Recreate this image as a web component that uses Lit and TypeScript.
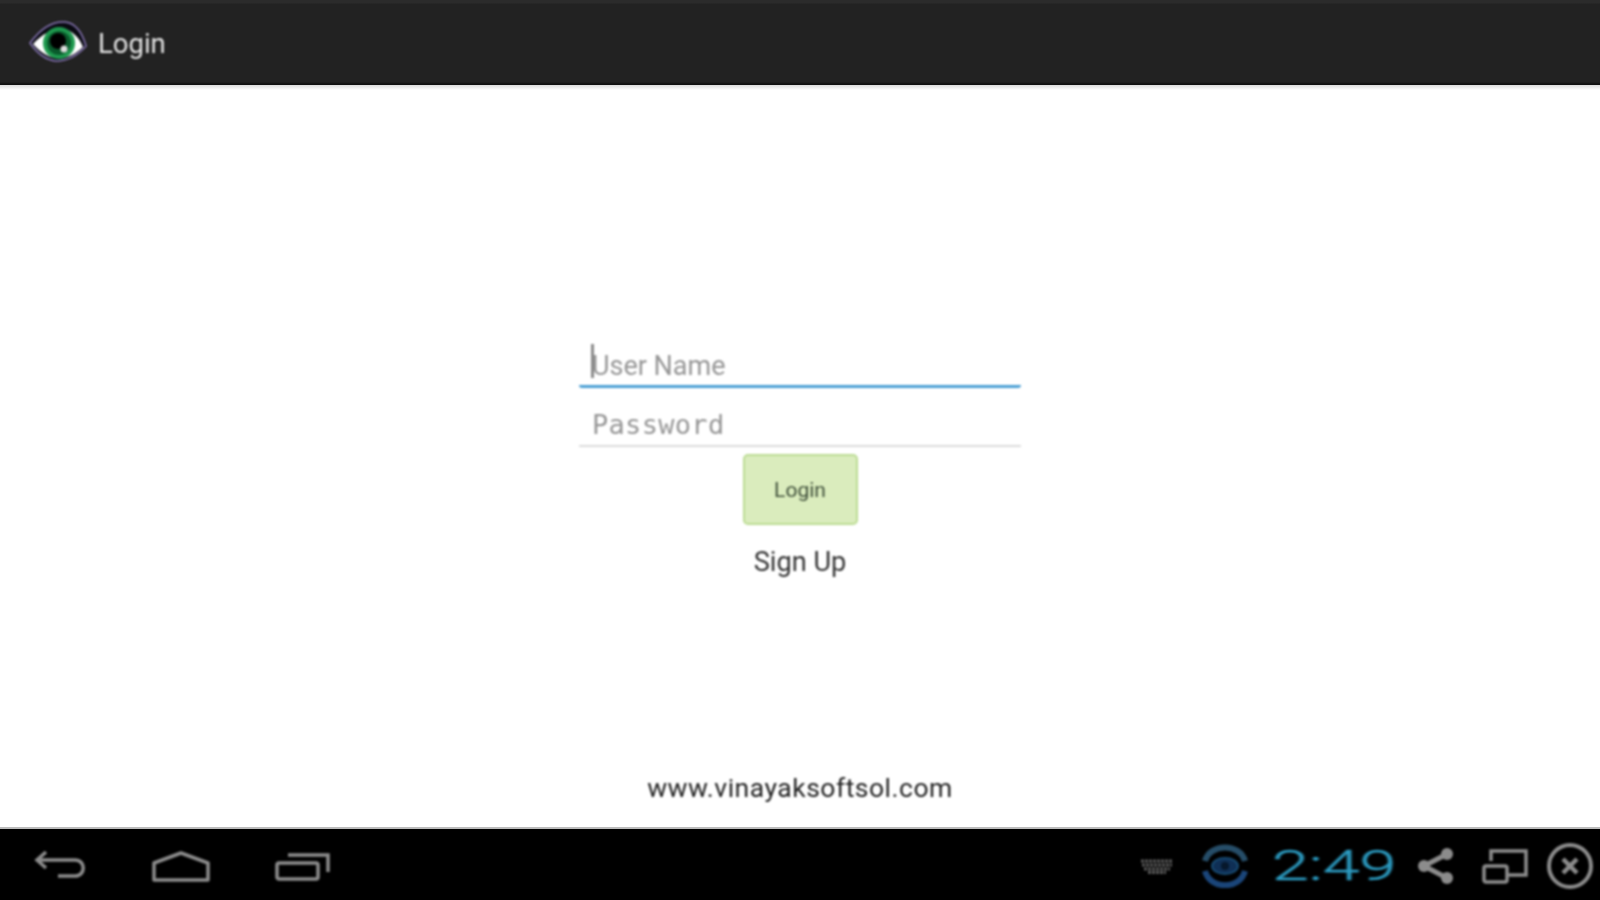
import { LitElement, html, css } from "lit";
import { customElement } from "lit/decorators.js";

@customElement("app-root")
export class AppRoot extends LitElement {
  static styles = css`
    :host { display: flex; flex-direction: column; width: 1600px; height: 900px; overflow: hidden; background: #fff; font-family: Roboto, "Liberation Sans", sans-serif; }
    .bar { height: 85px; flex: none; box-sizing: border-box; display: flex; align-items: center; padding: 0 0 0 29px; background: linear-gradient(#2b2b2b 0, #2b2b2b 3px, #222 4px, #222 82px, #111 84px); position: relative; }
    .bar::after { content: ""; position: absolute; left: 0; right: 0; top: 85px; height: 5px; background: linear-gradient(#dcdcdc, #fff); }
    .logo { width: 58px; height: 42px; margin-bottom: 3px; filter: blur(.8px); }
    .title { margin-left: 11px; margin-top: 2px; color: #e4e4e4; font-size: 27.5px; line-height: 30px; filter: blur(.8px); }
    .main { flex: 1; min-height: 0; display: flex; flex-direction: column; align-items: center; padding-top: 255px; box-sizing: border-box; filter: blur(.8px); }
    .field { width: 442px; height: 59px; box-sizing: border-box; padding: 0 13px 2px; display: flex; align-items: flex-end; position: relative; color: #969696; font-size: 27px; line-height: 36px; border-bottom: 2px solid #dcdcdc; }
    .field.focus { height: 48px; border-bottom: 3px solid #4a9fd4; padding-bottom: 1px; border-radius: 0 0 3px 3px; }
    .field.mono { font-family: "DejaVu Sans Mono", monospace; font-size: 27px; letter-spacing: .3px; }
    .caret { position: absolute; left: 12px; bottom: 7px; width: 3px; height: 34px; background: #8a8a8a; }
    .btn { width: 115px; height: 71px; box-sizing: border-box; margin-top: 7px; display: flex; align-items: center; justify-content: center; background: #daecbd; border: 2px solid #bcdc94; border-radius: 5px; color: #3e4e39; font-size: 21px; }
    .signup { margin-top: 20px; color: #333; font-size: 27.2px; line-height: 34px; }
    .site { margin-top: auto; margin-bottom: 23px; color: #222; font-size: 26.5px; line-height: 32px; letter-spacing: .5px; }
    .nav { height: 73px; flex: none; box-sizing: border-box; background: #000; border-top: 2px solid #bbb; display: flex; align-items: center; padding: 2px 6px 0 34px; }
    .nav svg, .clock { filter: blur(.9px); }
    .nav svg { flex: none; fill: none; stroke: #8c8c8c; stroke-width: 3.5; }
    .back { width: 52px; height: 32px; margin-top: 3px; }
    .home { width: 58px; height: 32px; margin-left: 66px; margin-top: 2px; }
    .recent { width: 56px; height: 28px; margin-left: 65px; margin-top: 2px; }
    .spacer { flex: 1; }
    .kbd { width: 34px; height: 16px; }
    .nav svg.kbd { stroke: #5a5a5a; stroke-width: 3; }
    .sync { width: 46px; height: 44px; margin-left: 28px; }
    .clock { width: 122px; margin-left: 24px; color: #2c9cc2; font-size: 42px; line-height: 44px; font-weight: 300; -webkit-text-stroke: .4px #2c9cc2; white-space: nowrap; transform: scaleX(1.58); transform-origin: left center; }
    .share { width: 38px; height: 38px; margin-left: 23px; }
    .win { width: 46px; height: 36px; margin-left: 27px; }
    .close { width: 48px; height: 48px; margin-left: 18px; }
  `;

  render() {
    return html`
      <header class="bar">
        <svg class="logo" viewBox="0 0 58 42">
          <path d="M1 23 C12 8 24 1 36 2 C46 3 53 12 57 26 C48 36 38 41 27 41 C17 40 8 33 1 23Z" fill="#0a0a12" stroke="#8a78b8" stroke-width="1.5"/>
          <path d="M4 24 C13 14 23 9 33 9 C43 10 50 17 54 27 C46 35 37 39 27 38 C18 37 10 31 4 24Z" fill="#fff"/>
          <circle cx="30" cy="23" r="16" fill="#1f9a4f"/>
          <circle cx="30" cy="23" r="12" fill="#0a5a2c"/>
          <circle cx="29" cy="21" r="8" fill="#000"/>
          <circle cx="35" cy="29" r="3.5" fill="#ddd"/>
        </svg>
        <span class="title">Login</span>
      </header>
      <main class="main">
        <div class="field focus"><span class="caret"></span><span>User Name</span></div>
        <div class="field mono"><span>Password</span></div>
        <div class="btn">Login</div>
        <div class="signup">Sign Up</div>
        <div class="site">www.vinayaksoftsol.com</div>
      </main>
      <footer class="nav">
        <svg class="back" viewBox="0 0 52 32">
          <path d="M12 1 L3 9 L12 17 M3 9 H41 C52 9 52 25 41 25 H24"/>
        </svg>
        <svg class="home" viewBox="0 0 58 32">
          <path d="M2 29 V12 L29 2 L56 12 V29 Z" stroke-linejoin="round"/>
        </svg>
        <svg class="recent" viewBox="0 0 56 28">
          <rect x="2" y="10" width="41" height="16" rx="2"/>
          <path d="M13 2 H53 V19"/>
        </svg>
        <span class="spacer"></span>
        <svg class="kbd" viewBox="0 0 34 16">
          <path d="M1 3 H33 M2 7 H32 M4 11 H30 M8 14.5 H26" stroke-dasharray="3 1"/>
        </svg>
        <svg class="sync" viewBox="0 0 46 44">
          <ellipse cx="23" cy="22" rx="13" ry="8" fill="#0f2f55" stroke="#174a72" stroke-width="2"/>
          <circle cx="23" cy="22" r="4" fill="#07182c" stroke="none"/>
          <path d="M3 17 C8 -1 38 -1 43 17" stroke="#264d68" stroke-width="6"/>
          <path d="M3 27 C8 46 38 46 43 27" stroke="#1a4579" stroke-width="6"/>
        </svg>
        <span class="clock">2:49</span>
        <svg class="share" viewBox="0 0 38 38">
          <path d="M7 19 L30 7 M7 19 L30 31" stroke-width="5"/>
          <circle cx="7" cy="19" r="6" fill="#8c8c8c" stroke="none"/>
          <circle cx="30" cy="7" r="6" fill="#8c8c8c" stroke="none"/>
          <circle cx="30" cy="31" r="6" fill="#8c8c8c" stroke="none"/>
        </svg>
        <svg class="win" viewBox="0 0 46 36">
          <path d="M9 13 V3 H44 V27 H26"/>
          <rect x="2" y="18" width="23" height="16" rx="2"/>
        </svg>
        <svg class="close" viewBox="0 0 48 48">
          <circle cx="24" cy="24" r="21" stroke-width="4"/>
          <path d="M17 17 L31 31 M31 17 L17 31" stroke-width="4.5"/>
        </svg>
      </footer>
    `;
  }
}
